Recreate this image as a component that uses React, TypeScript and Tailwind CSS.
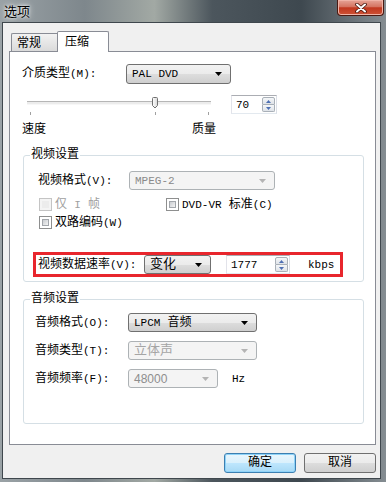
import React from "react";

// latin runs: SimSun-like half width
function L({ children }: { children: React.ReactNode }) {
  return <span className="text-[11px]">{children}</span>;
}

// small down arrow used in combo boxes
function Arrow({ color = "#000" }: { color?: string }) {
  return (
    <svg width="7" height="4" viewBox="0 0 7 4">
      <path d="M0 0h7L3.5 4z" fill={color} />
    </svg>
  );
}

function Select({
  value,
  w,
  disabled,
  h = "h-[19px]",
  textCls = "",
}: {
  value: React.ReactNode;
  w: string;
  disabled?: boolean;
  h?: string;
  textCls?: string;
}) {
  return (
    <div
      className={`${w} ${h} flex items-center justify-between rounded-[3px] border pl-[5px] pr-[8px] ${
        disabled
          ? "border-[#adb2b5] bg-[#f4f4f4] text-[#8a8a8a]"
          : "border-[#707070] bg-[linear-gradient(#f2f2f2_0%,#ebebeb_50%,#dddddd_51%,#cfcfcf_100%)] text-black"
      }`}
    >
      <span className={`leading-[14px] whitespace-pre ${textCls}`}>{value}</span>
      <Arrow color={disabled ? "#b4b4b4" : "#000"} />
    </div>
  );
}

function Spin({ value, w }: { value: string; w: string }) {
  return (
    <div className={`${w} h-[19px] flex border border-[#abadb3] border-l-[#e2e3ea] border-r-[#dbdfe6] border-b-[#e3e9ef] bg-white`}>
      <div className="flex-1 pl-[4px] flex items-center leading-[14px] text-[11px]">{value}</div>
      <div className="w-[15px] flex flex-col p-px">
        <div className="flex-1 flex items-center justify-center border border-[#a9b0b8] rounded-t-[2px] bg-[linear-gradient(#f5f7f9,#dfe3e8)]">
          <svg width="5" height="3" viewBox="0 0 5 3">
            <path d="M2.5 0L5 3H0z" fill="#4d6fb3" />
          </svg>
        </div>
        <div className="flex-1 flex items-center justify-center border border-t-0 border-[#a9b0b8] rounded-b-[2px] bg-[linear-gradient(#f5f7f9,#dfe3e8)]">
          <svg width="5" height="3" viewBox="0 0 5 3">
            <path d="M0 0h5L2.5 3z" fill="#4d6fb3" />
          </svg>
        </div>
      </div>
    </div>
  );
}

function Check({ label, disabled }: { label: React.ReactNode; disabled?: boolean }) {
  return (
    <div className="flex items-center gap-[3px] h-[13px]">
      <div
        className={`w-[13px] h-[13px] border p-[2px] ${
          disabled ? "border-[#c4c4c4] bg-[#f4f4f4]" : "border-[#8e8f8f] bg-white"
        }`}
      >
        <div
          className={`w-full h-full ${
            disabled
              ? "bg-[#ececec]"
              : "border border-[#a2a6ab] bg-[linear-gradient(135deg,#c9ccd0,#f4f4f4)]"
          }`}
        />
      </div>
      <span className={`leading-[14px] whitespace-pre ${disabled ? "text-[#a0a0a0]" : "text-black"}`}>
        {label}
      </span>
    </div>
  );
}

function Button({ label, primary }: { label: string; primary?: boolean }) {
  return (
    <div
      className={`w-[72px] h-[20px] flex items-center justify-center rounded-[3px] border leading-[14px] ${
        primary
          ? "border-[#3c7fb1] bg-[linear-gradient(#eaf6fd_0%,#d9f0fc_50%,#bee6fd_51%,#a7d9f5_100%)] shadow-[inset_0_0_0_1px_#8fd3f8]"
          : "border-[#707070] bg-[linear-gradient(#f2f2f2_0%,#ebebeb_50%,#dddddd_51%,#cfcfcf_100%)]"
      }`}
    >
      {label}
    </div>
  );
}

export default function App() {
  return (
    <div className="w-[386px] h-[482px] flex flex-col overflow-hidden bg-[linear-gradient(90deg,#9aa2a6_0%,#7e878c_22%,#a2a9a4_40%,#4c565d_55%,#3e484f_78%,#858d92_100%)] font-['Liberation_Mono','Noto_Sans_CJK_SC',monospace] text-[12px] text-black select-none">
      {/* title bar */}
      <div className="h-[22px] flex items-start justify-between shrink-0">
        <div className="pl-[4px] pt-[3px] text-[13px] leading-[16px] font-['Noto_Sans_CJK_SC',sans-serif] [text-shadow:0_0_6px_#ffffff,0_0_3px_#ffffff]">
          选项
        </div>
        <div className="mr-[2px] w-[47px] h-[16px] flex items-center justify-center rounded-b-[4px] border border-t-0 border-[#4a1a12] bg-[linear-gradient(#e6a497_0%,#d57461_45%,#c1381f_52%,#cc5236_100%)] shadow-[inset_0_0_0_1px_#f0b3a6]">
          <svg width="12" height="10" viewBox="0 0 12 10">
            <path d="M2 1.5l8 7M10 1.5l-8 7" stroke="#43140c" strokeWidth="3.6" strokeLinecap="round" />
            <path d="M2 1.5l8 7M10 1.5l-8 7" stroke="#ffffff" strokeWidth="2" strokeLinecap="round" />
          </svg>
        </div>
      </div>

      {/* client area */}
      <div className="flex-1 ml-[2px] mr-[5px] mb-[3px] border border-[#3f474d] bg-[#f0f0f0] flex flex-col pt-[8px] pl-[6px]">
        {/* tabs */}
        <div className="flex items-end ml-[2px] -mb-px relative z-10">
          <div className="w-[46px] h-[18px] mb-px border border-r-0 border-b-0 border-[#898c95] bg-[linear-gradient(#f2f2f2,#dadada)] pl-[5px] pt-[3px] leading-[14px] rounded-tl-[2px]">
            常规
          </div>
          <div className="w-[52px] h-[21px] border border-b-0 border-[#898c95] bg-white pl-[7px] pt-[4px] leading-[14px] rounded-t-[2px]">
            压缩
          </div>
        </div>

        {/* tab panel */}
        <div className="w-[367px] h-[394px] border border-[#898c95] bg-white pl-[12px] flex flex-col">
          <div className="mt-[12px] flex items-center h-[20px]">
            <span className="w-[104px] leading-[14px]">
              介质类型<L>(M):</L>
            </span>
            <Select value={<L>PAL DVD</L>} w="w-[105px]" h="h-[20px]" />
          </div>

          <div className="mt-[11px] flex items-start">
            <svg className="ml-[5px]" width="184" height="22" viewBox="0 0 184 22">
              <rect x="0" y="6.5" width="184" height="3" fill="#ececec" />
              <line x1="0" y1="6.5" x2="184" y2="6.5" stroke="#b6b6b6" />
              <line x1="0" y1="9.5" x2="184" y2="9.5" stroke="#f7f7f7" />
              <line x1="3.5" y1="17" x2="3.5" y2="20" stroke="#a0a0a0" />
              <line x1="128.5" y1="17" x2="128.5" y2="20" stroke="#a0a0a0" />
              <line x1="181.5" y1="17" x2="181.5" y2="20" stroke="#a0a0a0" />
              <defs>
                <linearGradient id="thumb" x1="0" y1="0" x2="1" y2="0">
                  <stop offset="0" stopColor="#ffffff" />
                  <stop offset="1" stopColor="#d8d8d8" />
                </linearGradient>
              </defs>
              <path
                d="M125.5 3.5q0-1 1-1h3q1 0 1 1v7l-2.5 2.5l-2.5-2.5z"
                fill="url(#thumb)"
                stroke="#707070"
              />
            </svg>
            <div className="ml-[20px]">
              <Spin value="70" w="w-[46px]" />
            </div>
          </div>

          <div className="mt-[5px] flex leading-[16px]">
            <span className="w-[170px]">速度</span>
            <span>质量</span>
          </div>

          {/* video settings */}
          <fieldset className="mt-[10px] ml-[1px] w-[341px] min-w-0 border border-[#d5dfe5] rounded-[3px]">
            <legend className="ml-[6px] px-[1px] leading-[14px]">视频设置</legend>
            <div className="pl-[14px] pb-[4px] flex flex-col">
              <div className="mt-[9px] flex items-center">
                <span className="w-[91px] leading-[14px]">
                  视频格式<L>(V):</L>
                </span>
                <Select value={<L>MPEG-2</L>} w="w-[146px]" disabled />
              </div>
              <div className="mt-[8px] flex ml-[1px]">
                <div className="w-[127px]">
                  <Check label={<>仅 <L>I</L> 帧</>} disabled />
                </div>
                <Check label={<><L>DVD-VR</L> 标准<L>(C)</L></>} />
              </div>
              <div className="mt-[5px] ml-[1px]">
                <Check label={<>双路编码<L>(W)</L></>} />
              </div>
              <div className="mt-[23px] -ml-[5px] w-[310px] h-[25px] border-[3px] border-[#e8262d] pl-[2px] flex items-center">
                <span className="w-[106px] leading-[14px] whitespace-pre">
                  视频数据速率<L>(V):</L>
                </span>
                <Select value="变化" w="w-[67px]" textCls="text-[13px]" />
                <div className="ml-[15px]">
                  <Spin value="1777" w="w-[64px]" />
                </div>
                <span className="ml-[18px] leading-[14px]">
                  <L>kbps</L>
                </span>
              </div>
            </div>
          </fieldset>

          {/* audio settings */}
          <fieldset className="mt-[10px] ml-[1px] w-[341px] min-w-0 border border-[#d5dfe5] rounded-[3px]">
            <legend className="ml-[6px] px-[1px] leading-[14px]">音频设置</legend>
            <div className="pl-[11px] pb-[35px] flex flex-col">
              <div className="mt-[7px] flex items-center">
                <span className="w-[93px] leading-[14px]">
                  音频格式<L>(O):</L>
                </span>
                <Select value={<><L>LPCM</L> 音频</>} w="w-[129px]" />
              </div>
              <div className="mt-[9px] flex items-center">
                <span className="w-[93px] leading-[14px]">
                  音频类型<L>(T):</L>
                </span>
                <Select value="立体声" w="w-[129px]" disabled textCls="text-[#a5a5a5] text-[13px]" />
              </div>
              <div className="mt-[9px] flex items-center">
                <span className="w-[93px] leading-[14px]">
                  音频频率<L>(F):</L>
                </span>
                <Select value="48000" w="w-[90px]" disabled textCls="font-['Liberation_Sans',sans-serif] text-[#8e8e8e]" />
                <span className="ml-[14px] leading-[14px]">
                  <L>Hz</L>
                </span>
              </div>
            </div>
          </fieldset>
        </div>

        {/* dialog buttons */}
        <div className="mt-[8px] flex justify-end gap-[8px] pr-[4px]">
          <Button label="确定" primary />
          <Button label="取消" />
        </div>
      </div>
    </div>
  );
}
